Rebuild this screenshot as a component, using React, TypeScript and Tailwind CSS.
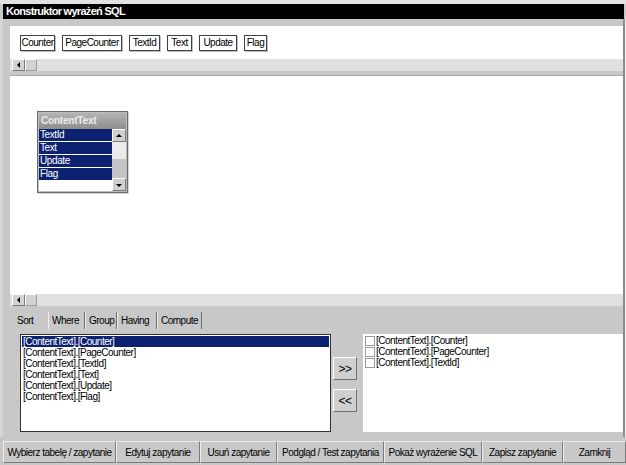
import React from 'react'

const fields = [
  { name: 'Counter', w: 'w-[35px]' },
  { name: 'PageCounter', w: 'w-[60px]' },
  { name: 'TextId', w: 'w-[31px]' },
  { name: 'Text', w: 'w-[25px]' },
  { name: 'Update', w: 'w-[38px]' },
  { name: 'Flag', w: 'w-[23px]' },
]

const columns = ['Counter', 'PageCounter', 'TextId', 'Text', 'Update', 'Flag']

const tabs = [
  { name: 'Sort', w: 'w-[34px]' },
  { name: 'Where', w: 'w-[37px]' },
  { name: 'Group', w: 'w-[32px]' },
  { name: 'Having', w: 'w-[40px]' },
  { name: 'Compute', w: 'w-[45px]' },
]

const actions = [
  { label: 'Wybierz tabelę / zapytanie', w: 'w-[113px]' },
  { label: 'Edytuj zapytanie', w: 'w-[84px]' },
  { label: 'Usuń zapytanie', w: 'w-[77px]' },
  { label: 'Podgląd / Test zapytania', w: 'w-[107px]' },
  { label: 'Pokaż wyrażenie SQL', w: 'w-[98px]' },
  { label: 'Zapisz zapytanie', w: 'w-[81px]' },
  { label: 'Zamknij', w: 'w-[63px]' },
]

const Arrow = ({ dir }: { dir: 'left' | 'up' | 'down' }) => {
  const pts = dir === 'left' ? '5,1 2,4 5,7' : dir === 'up' ? '1,5 4,2 7,5' : '1,3 4,6 7,3'
  return (
    <svg width="8" height="8" viewBox="0 0 8 8">
      <polygon points={pts} fill="#000" />
    </svg>
  )
}

const HScroll = () => (
  <div className="h-[12px] bg-[#e0e0e0] flex pl-[2px]">
    <div className="w-[13px] h-full bg-[#d2d2d2] border-t border-l border-white border-r border-b border-r-[#7a7a7a] border-b-[#7a7a7a] flex items-center justify-center">
      <Arrow dir="left" />
    </div>
    <div className="w-[12px] h-full bg-[#d2d2d2] border-t border-l border-white border-r border-b border-r-[#9a9a9a] border-b-[#9a9a9a]" />
  </div>
)

const TableBox = () => (
  <div className="absolute left-[27px] top-[35px] w-[91px] h-[82px] bg-[#bcbcbc] border border-[#6a6a6a] p-[1px] shadow-[1px_1px_0_#d8d8d8]">
    <div className="h-[16px] bg-gradient-to-b from-[#b4b4b4] to-[#8e8e8e] text-[#ececec] font-bold text-[10px] leading-[16px] pl-[2px] tracking-[-0.2px]">
      ContentText
    </div>
    <div className="flex h-[62px]">
      <div className="w-[74px] bg-white flex flex-col gap-[1px]">
        {['TextId', 'Text', 'Update', 'Flag'].map((c) => (
          <div key={c} className="h-[12px] bg-[#0c2170] text-white text-[10px] leading-[12px] pl-[1px] tracking-[-0.4px]">
            {c}
          </div>
        ))}
      </div>
      <div className="w-[14px] flex flex-col bg-[#c8c8c8]">
        <div className="h-[13px] bg-[#d0d0d0] border-t border-l border-white border-r border-b border-r-[#7a7a7a] border-b-[#7a7a7a] flex items-center justify-center">
          <Arrow dir="up" />
        </div>
        <div className="h-[17px] bg-[#ebebeb]" />
        <div className="flex-1 bg-[#c4c4c4]" />
        <div className="h-[13px] bg-[#d0d0d0] border-t border-l border-white border-r border-b border-r-[#7a7a7a] border-b-[#7a7a7a] flex items-center justify-center">
          <Arrow dir="down" />
        </div>
      </div>
    </div>
  </div>
)

export default function App() {
  return (
    <div
      className="w-[626px] h-[465px] bg-[#c8c8c8] flex flex-col overflow-hidden text-black"
      style={{ fontFamily: '"Liberation Sans", Arial, sans-serif' }}
    >
      <div className="h-[4px] bg-[#e2e2e2]" />
      <div className="h-[15px] ml-[3px] mr-[2px] bg-black text-white font-bold text-[11px] leading-[15px] pl-[3px] tracking-[-0.7px]">
        Konstruktor wyrażeń SQL
      </div>

      <div className="flex h-[418px]">
        <div className="w-[10px] border-l-[3px] border-[#d6d6d6]" />
        <div className="w-[613px] flex flex-col">
          <div className="h-[7px]" />
          <div className="h-[33px] bg-white flex items-center pl-[10px] gap-[7px]">
            {fields.map((f) => (
              <div
                key={f.name}
                className={`${f.w} h-[16px] border border-[#404040] shadow-[1px_1px_0_#c0c0c0] text-[10px] leading-[14px] text-center tracking-[-0.5px] whitespace-nowrap`}
              >
                {f.name}
              </div>
            ))}
          </div>
          <HScroll />
          <div className="h-[5px] border-b border-[#a8a8a8]" />
          <div className="h-[218px] bg-white relative">
            <TableBox />
          </div>
          <HScroll />
          <div className="h-[6px]" />

          <div className="h-[17px] flex pl-[4px] text-[10px] tracking-[-0.5px]">
            {tabs.map((t, i) => (
              <div
                key={t.name}
                className={`${t.w} h-full leading-[17px] pl-[3px] whitespace-nowrap ${
                  i === 0 ? '' : 'border-l border-l-[#f0f0f0] border-r border-r-[#6a6a6a]'
                }`}
              >
                {t.name}
              </div>
            ))}
          </div>

          <div className="h-[107px] flex pt-[5px]">
            <div className="ml-[10px] w-[311px] h-[98px] bg-white border border-[#303030] p-[1px] text-[10px] leading-[11px] tracking-[-0.5px]">
              {columns.map((c, i) => (
                <div key={c} className={`pl-[1px] ${i === 0 ? 'bg-[#0c2170] text-white' : ''}`}>
                  [ContentText].[{c}]
                </div>
              ))}
            </div>
            <div className="ml-[2px] w-[25px] flex flex-col pt-[23px] gap-[9px]">
              {['>>', '<<'].map((b) => (
                <div
                  key={b}
                  className="h-[23px] w-[24px] bg-[#cfcfcf] border-t border-l border-white border-r border-b border-r-[#6e6e6e] border-b-[#6e6e6e] flex items-center justify-center text-[12px] tracking-[-0.5px]"
                >
                  {b}
                </div>
              ))}
            </div>
            <div className="ml-[5px] flex-1 h-[98px] bg-white pt-[1px] pl-[2px] text-[10px] leading-[11px] tracking-[-0.5px]">
              {columns.slice(0, 3).map((c) => (
                <div key={c} className="flex items-center">
                  <span className="w-[10px] h-[10px] border border-[#9a9a9a] bg-white mr-[1px] shrink-0" />
                  [ContentText].[{c}]
                </div>
              ))}
            </div>
          </div>
        </div>
        <div className="w-[3px] border-l-2 border-[#8c8c8c] bg-[#f0f0f0]" />
      </div>

      <div className="h-[4px]" />
      <div className="h-[22px] ml-[3px] flex text-[10px] tracking-[-0.5px]">
        {actions.map((a) => (
          <div
            key={a.label}
            className={`${a.w} h-full bg-[#c8c8c8] border-t border-l border-[#ececec] border-r border-b border-r-[#7c7c7c] border-b-[#7c7c7c] flex items-center justify-center whitespace-nowrap`}
          >
            {a.label}
          </div>
        ))}
      </div>
    </div>
  )
}
